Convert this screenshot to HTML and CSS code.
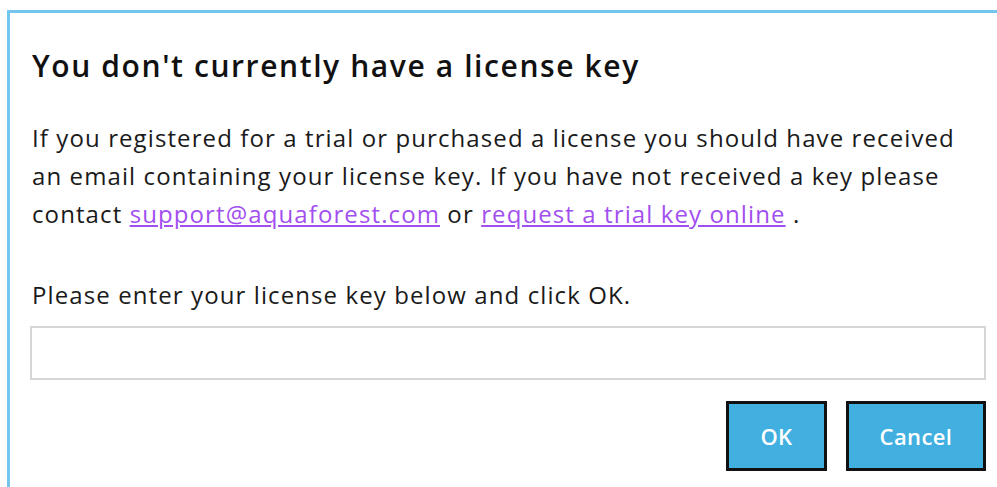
FILE: index.html
```html
<!DOCTYPE html>
<html lang="en">
<head>
<meta charset="utf-8">
<title>License key</title>
<link rel="stylesheet" href="styles.css">
</head>
<body>
<div class="dialog">
  <h1 class="dialog-title">You don't currently have a license key</h1>
  <p class="dialog-text">If you registered for a trial or purchased a license you should have received an email containing your license key. If you have not received a key please contact <a href="#" class="link">support@aquaforest.com</a> or <a href="#" class="link">request a trial key online</a> .</p>
  <p class="dialog-prompt">Please enter your license key below and click OK.</p>
  <input class="key-input" type="text" aria-label="License key">
  <div class="actions">
    <button class="btn btn-ok">OK</button>
    <button class="btn btn-cancel">Cancel</button>
  </div>
</div>
</body>
</html>
```

FILE: styles.css
```css
html, body {
  margin: 0;
  padding: 0;
  background: #ffffff;
}

body {
  font-family: "Open Sans", "Noto Sans", sans-serif;
  color: #1a1a1a;
  overflow: hidden;
}

.dialog {
  margin: 10px 0 0 7px;
  border-top: 3px solid #74c6ee;
  border-left: 3px solid #74c6ee;
  padding: 0 11px 0 20px;
  height: 480px;
  display: flex;
  flex-direction: column;
}

.dialog-title {
  margin: 35px 0 0 2px;
  font-size: 30px;
  font-weight: 600;
  letter-spacing: 1.6px;
  line-height: 36px;
  color: #111;
}

.dialog-text {
  margin: 35px 0 0 2px;
  font-size: 24px;
  letter-spacing: 1.1px;
  line-height: 38px;
}

.dialog-prompt {
  margin: 43px 0 0 2px;
  font-size: 24px;
  letter-spacing: 1.1px;
  line-height: 38px;
}

.link {
  color: #a24ff0;
  text-decoration: underline;
}

.key-input {
  margin: 12px 0 0 0;
  height: 54px;
  box-sizing: border-box;
  border: 2px solid #d6d6d6;
  background: #fff;
  outline: none;
  font: inherit;
}

.actions {
  display: flex;
  justify-content: flex-end;
  gap: 19px;
  margin-top: 21px;
}

.btn {
  box-sizing: border-box;
  height: 70px;
  border: 3px solid #111;
  background: #41b0e1;
  color: #fff;
  font-family: "Open Sans", "Noto Sans", sans-serif;
  font-weight: 600;
  font-size: 22px;
  letter-spacing: 0.4px;
  padding: 0;
}

.btn-ok {
  width: 101px;
}

.btn-cancel {
  width: 140px;
}
```
